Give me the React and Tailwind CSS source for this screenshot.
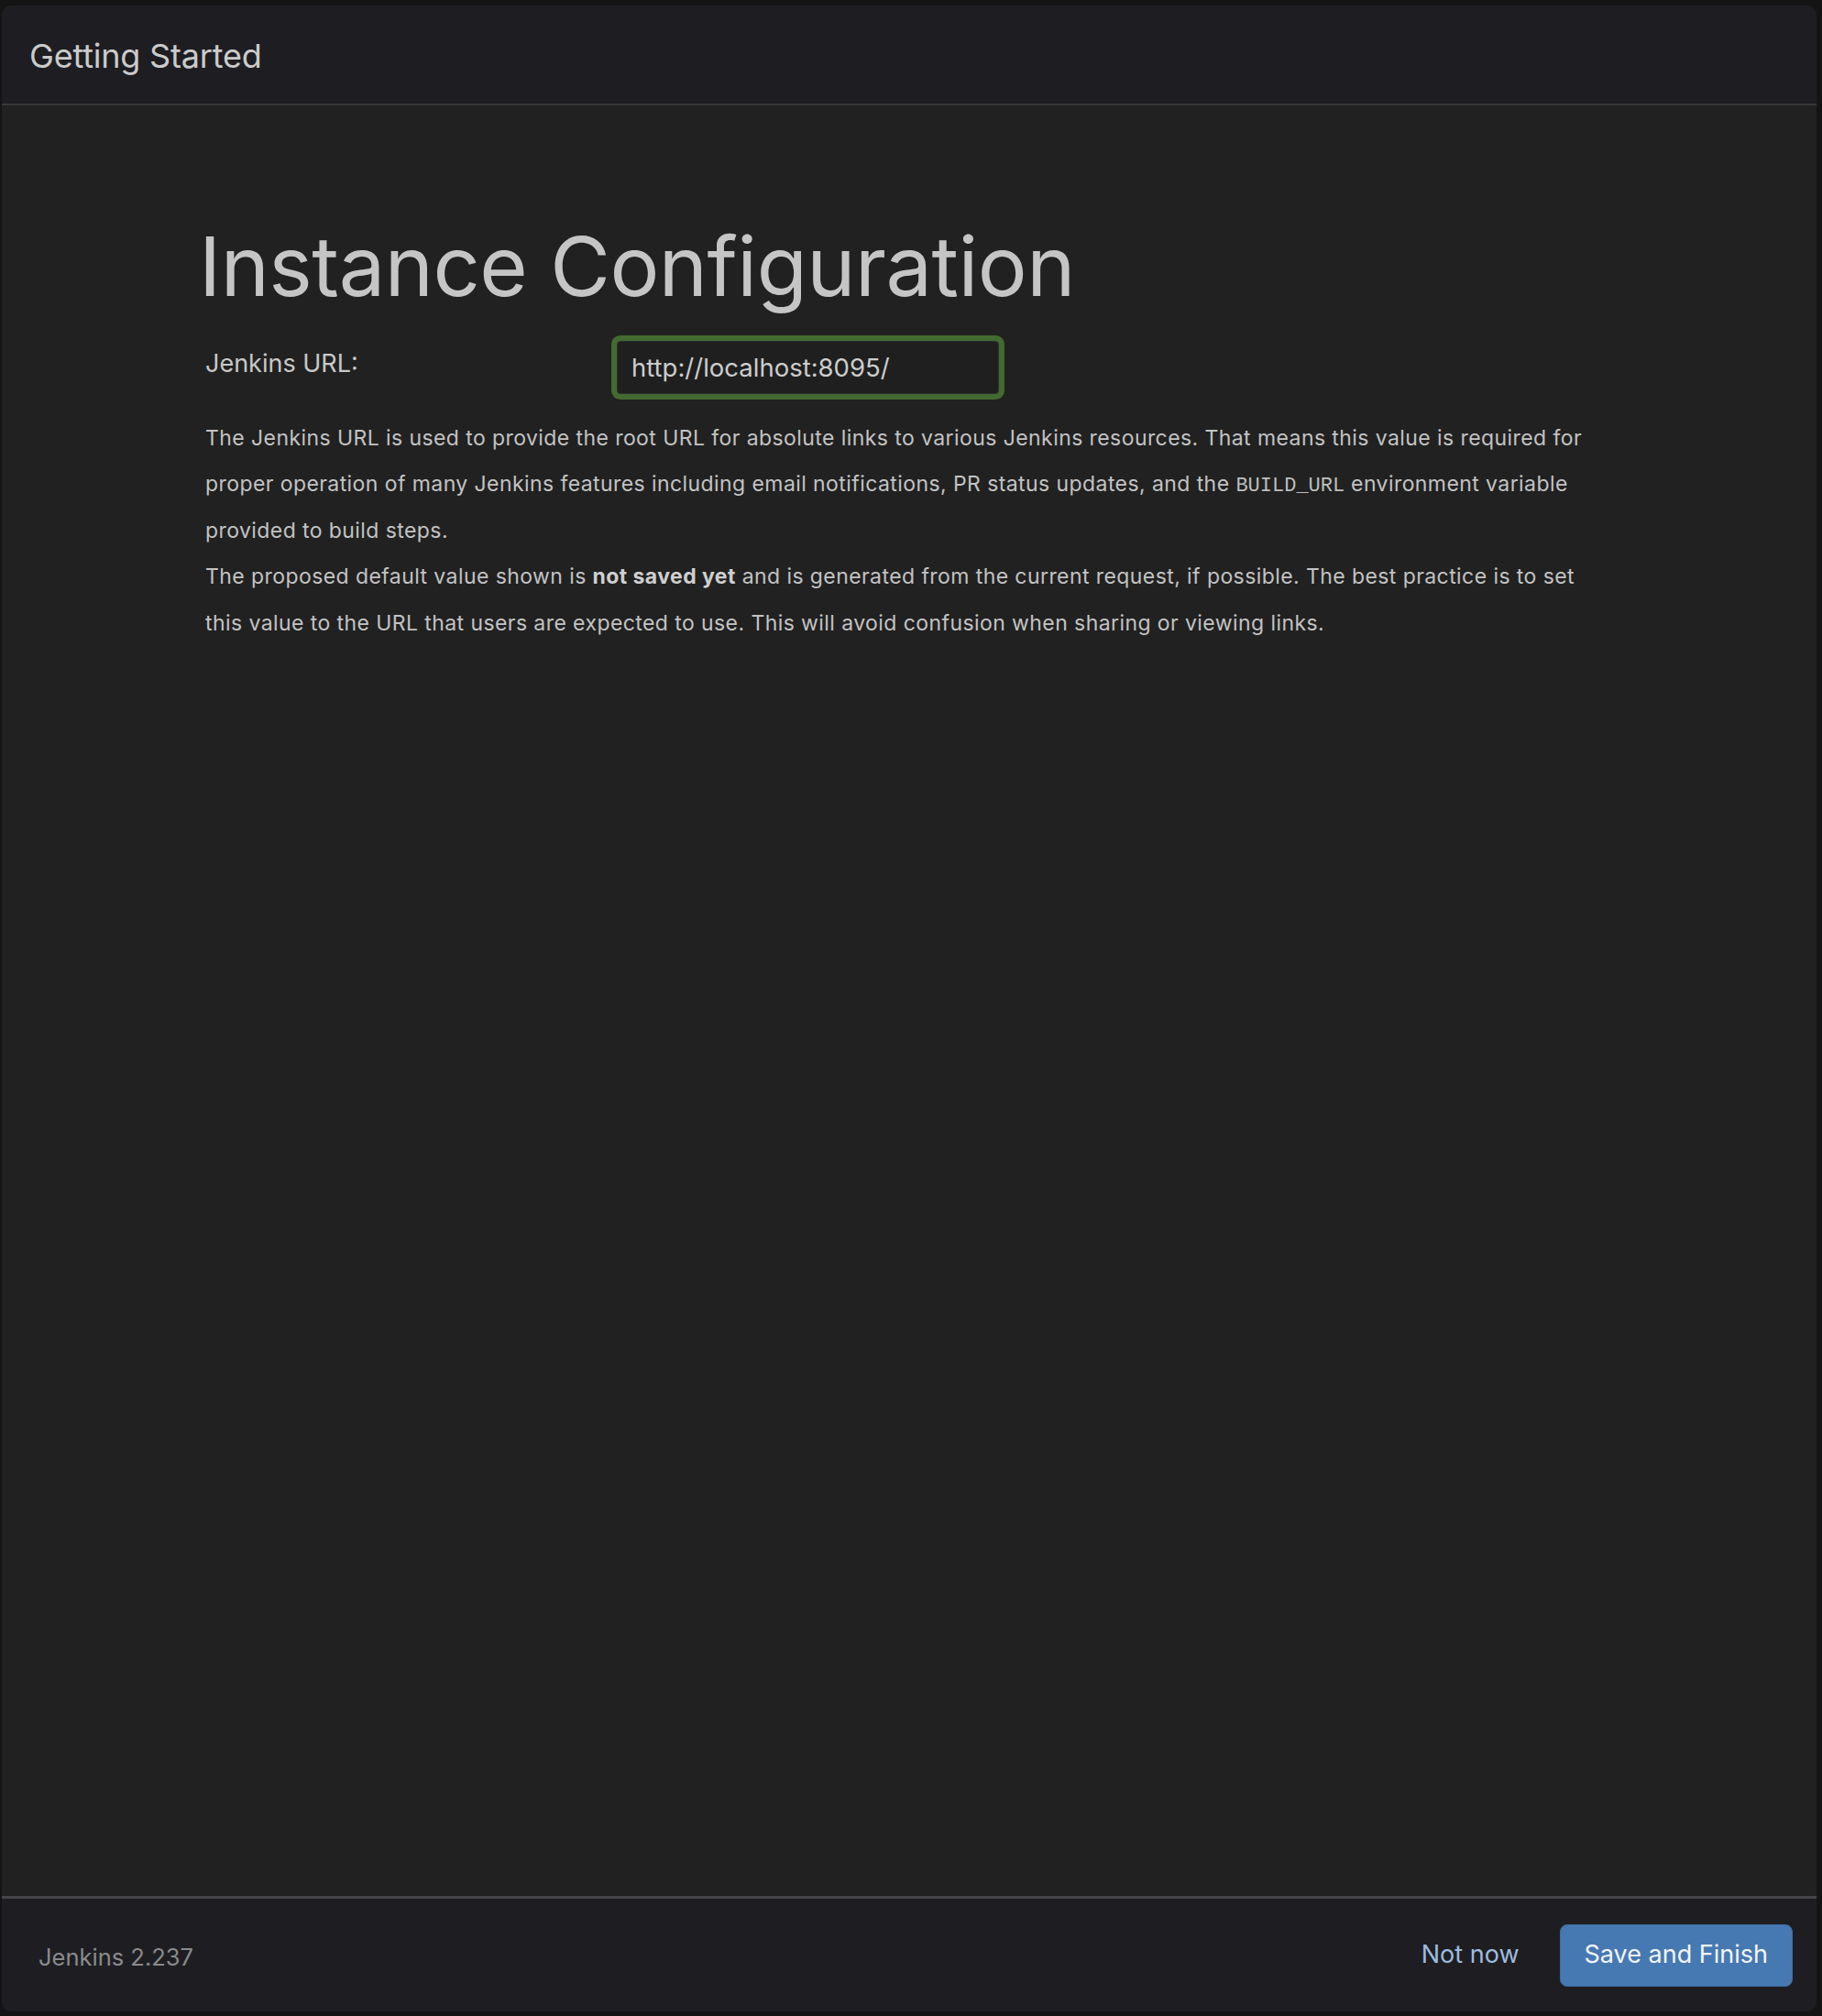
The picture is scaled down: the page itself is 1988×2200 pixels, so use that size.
export default function App() {
  return (
    <div
      className="h-[2200px] bg-[#141414] pt-[6px] pl-[2px] pr-[6px] pb-[5px] flex"
      style={{ fontFamily: "Inter, 'Liberation Sans', sans-serif" }}
    >
      <div className="flex-1 flex flex-col rounded-[10px] overflow-hidden">
        {/* header */}
        <div className="h-[109px] shrink-0 bg-[#1e1e22] border-b-2 border-[#38383a] flex items-center pl-[30px] pt-[2px]">
          <h1 className="text-[36px] text-[#cbcbcb] leading-none tracking-[-0.2px]">
            Getting Started
          </h1>
        </div>

        {/* body */}
        <div className="flex-1 bg-[#212121] pl-[222px] pt-[126px]">
          <h2 className="text-[90px] leading-[99px] text-[#c5c5c5] -ml-[7px] tracking-[-0.5px]">
            Instance Configuration
          </h2>

          <div className="flex items-start mt-[32px]">
            <label className="w-[449px] shrink-0 mt-[5px] text-[27px] text-[#c8c8c8]">
              Jenkins URL:
            </label>
            <input
              type="text"
              defaultValue="http://localhost:8095/"
              className="w-[417px] h-[58px] rounded-[4px] bg-[#1f1f1f] border border-[#2f2f2f] ring-[6px] ring-[#436a31] pl-[15px] text-[27.5px] text-[#cdcdcd] outline-none"
              style={{ fontFamily: "Inter, 'Liberation Sans', sans-serif" }}
            />
          </div>

          <div className="w-[1525px] mt-[23px] text-[23px] tracking-[0.42px] leading-[50.4px] text-[#c3c3c3]">
            <p>
              The Jenkins URL is used to provide the root URL for absolute links
              to various Jenkins resources. That means this value is required
              for proper operation of many Jenkins features including email
              notifications, PR status updates, and the{" "}
              <code
                className="text-[22px] leading-none tracking-normal text-[#bdbdbd]"
                style={{ fontFamily: "'Liberation Mono', monospace" }}
              >
                BUILD_URL
              </code>{" "}
              environment variable provided to build steps.
            </p>
            <p>
              The proposed default value shown is{" "}
              <strong className="font-bold text-[#cfcfcf]">not saved yet</strong>{" "}
              and is generated from the current request, if possible. The best
              practice is to set this value to the URL that users are expected
              to use. This will avoid confusion when sharing or viewing links.
            </p>
          </div>
        </div>

        {/* footer */}
        <div className="h-[126px] shrink-0 bg-[#1e1e22] border-t-[3px] border-[#454547] flex items-center justify-between pl-[40px] pr-[26px]">
          <span className="text-[25.5px] text-[#8a8a8c] mt-[6px]">
            Jenkins 2.237
          </span>
          <div className="flex items-center gap-[44px]">
            <button className="text-[27px] text-[#9dbcdf]">Not now</button>
            <button className="h-[68px] px-[26px] rounded-[8px] bg-[#4679b2] border border-[#3f6ea3] text-[27px] text-[#f2f4f7]">
              Save and Finish
            </button>
          </div>
        </div>
      </div>
    </div>
  );
}
